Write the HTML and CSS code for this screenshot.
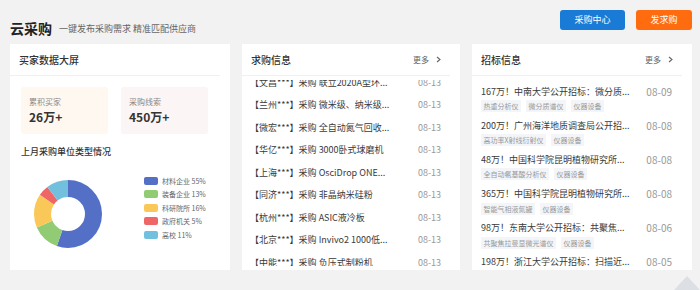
FILE: index.html
```html
<!DOCTYPE html>
<html lang="zh-CN">
<head>
    <meta charset="UTF-8">
    <title>云采购</title>
    <link rel="stylesheet" href="styles.css">
</head>
<body>
    <div class="header">
        <div class="brand">
            <span class="logo">云采购</span>
            <span class="slogan">一键发布采购需求 精准匹配供应商</span>
        </div>
        <div class="actions">
            <a href="#" class="btn btn-blue">采购中心</a>
            <a href="#" class="btn btn-orange">发求购</a>
        </div>
    </div>

    <div class="panels">
        <div class="card">
            <div class="card-head">
                <span class="card-title">买家数据大屏</span>
            </div>
            <div class="card-body screen">
                <div class="stats">
                    <div class="stat stat-buyer">
                        <div class="stat-label">累积买家</div>
                        <div class="stat-value">26万+</div>
                    </div>
                    <div class="stat stat-demand">
                        <div class="stat-label">采购线索</div>
                        <div class="stat-value">450万+</div>
                    </div>
                </div>
                <div class="chart-title">上月采购单位类型情况</div>
                <div class="chart">
                    <svg class="donut" width="94" height="80" viewBox="0 0 94 80">
                        <g transform="rotate(-90 47 40)" fill="none" stroke-width="17">
                            <circle cx="47" cy="40" r="25.5" stroke="#5470c6" stroke-dasharray="88.12 160.22" stroke-dashoffset="0"></circle>
                            <circle cx="47" cy="40" r="25.5" stroke="#91cc75" stroke-dasharray="20.83 160.22" stroke-dashoffset="-88.12"></circle>
                            <circle cx="47" cy="40" r="25.5" stroke="#fac858" stroke-dasharray="25.64 160.22" stroke-dashoffset="-108.95"></circle>
                            <circle cx="47" cy="40" r="25.5" stroke="#ee6666" stroke-dasharray="8.01 160.22" stroke-dashoffset="-134.59"></circle>
                            <circle cx="47" cy="40" r="25.5" stroke="#73c0de" stroke-dasharray="17.62 160.22" stroke-dashoffset="-142.6"></circle>
                        </g>
                    </svg>
                    <ul class="legend">
                        <li><i class="swatch c-blue"></i>材料企业 55%</li>
                        <li><i class="swatch c-green"></i>装备企业 13%</li>
                        <li><i class="swatch c-yellow"></i>科研院所 16%</li>
                        <li><i class="swatch c-red"></i>政府机关 5%</li>
                        <li><i class="swatch c-cyan"></i>高校 11%</li>
                    </ul>
                </div>
            </div>
        </div>

        <div class="card">
            <div class="card-head">
                <span class="card-title">求购信息</span>
                <a href="#" class="more">更多
                    <svg width="5" height="7" viewBox="0 0 5 7"><path d="M1 1 L4 3.5 L1 6" fill="none" stroke="#666" stroke-width="1.1"/></svg>
                </a>
            </div>
            <div class="card-body">
                <div class="scroller">
                    <ul class="demand-list">
                        <li><span class="demand-name">【文昌***】采购 联立2020A型环...</span><span class="demand-date">08-13</span></li>
                        <li><span class="demand-name">【兰州***】采购 微米级、纳米级...</span><span class="demand-date">08-13</span></li>
                        <li><span class="demand-name">【微宏***】采购 全自动氮气回收...</span><span class="demand-date">08-13</span></li>
                        <li><span class="demand-name">【华亿***】采购 3000卧式球磨机</span><span class="demand-date">08-13</span></li>
                        <li><span class="demand-name">【上海***】采购 OsciDrop ONE...</span><span class="demand-date">08-13</span></li>
                        <li><span class="demand-name">【同济***】采购 非晶纳米硅粉</span><span class="demand-date">08-13</span></li>
                        <li><span class="demand-name">【杭州***】采购 ASIC液冷板</span><span class="demand-date">08-13</span></li>
                        <li><span class="demand-name">【北京***】采购 Invivo2 1000低...</span><span class="demand-date">08-13</span></li>
                        <li><span class="demand-name">【中能***】采购 负压式制粉机</span><span class="demand-date">08-13</span></li>
                    </ul>
                </div>
            </div>
        </div>

        <div class="card">
            <div class="card-head">
                <span class="card-title">招标信息</span>
                <a href="#" class="more">更多
                    <svg width="5" height="7" viewBox="0 0 5 7"><path d="M1 1 L4 3.5 L1 6" fill="none" stroke="#666" stroke-width="1.1"/></svg>
                </a>
            </div>
            <div class="card-body">
                <ul class="bid-list">
                    <li>
                        <div class="bid-row"><span class="bid-name">167万！中南大学公开招标：微分质...</span><span class="bid-date">08-09</span></div>
                        <div class="tags"><span>热重分析仪</span><span>微分质谱仪</span><span>仪器设备</span></div>
                    </li>
                    <li>
                        <div class="bid-row"><span class="bid-name">200万！广州海洋地质调查局公开招...</span><span class="bid-date">08-08</span></div>
                        <div class="tags"><span>高功率X射线衍射仪</span><span>仪器设备</span></div>
                    </li>
                    <li>
                        <div class="bid-row"><span class="bid-name">48万！中国科学院昆明植物研究所...</span><span class="bid-date">08-08</span></div>
                        <div class="tags"><span>全自动氨基酸分析仪</span><span>仪器设备</span></div>
                    </li>
                    <li>
                        <div class="bid-row"><span class="bid-name">365万！中国科学院昆明植物研究所...</span><span class="bid-date">08-08</span></div>
                        <div class="tags"><span>智能气相液氮罐</span><span>仪器设备</span></div>
                    </li>
                    <li>
                        <div class="bid-row"><span class="bid-name">98万！东南大学公开招标：共聚焦...</span><span class="bid-date">08-06</span></div>
                        <div class="tags"><span>共聚焦拉曼显微光谱仪</span><span>仪器设备</span></div>
                    </li>
                    <li>
                        <div class="bid-row"><span class="bid-name">198万！浙江大学公开招标：扫描近...</span><span class="bid-date">08-05</span></div>
                        <div class="tags"><span>扫描近场光学显微镜</span><span>仪器设备</span></div>
                    </li>
                </ul>
            </div>
        </div>
    </div>

    <a href="#" class="back-top"></a>
</body>
</html>
```

FILE: styles.css
```css
body {
    margin: 0;
    background: #f2f2f2;
    font-family: "Noto Sans CJK SC", "Noto Sans", sans-serif;
    color: #333;
}

ul {
    margin: 0;
    padding: 0;
    list-style: none;
}

a {
    text-decoration: none;
}

.header {
    display: flex;
    justify-content: space-between;
    align-items: center;
    height: 34px;
    padding: 10px 8px 0 10px;
}

.brand {
    display: flex;
    align-items: center;
    padding-top: 2px;
}

.logo {
    font-size: 14px;
    font-weight: bold;
    color: #222;
}

.slogan {
    margin-left: 7px;
    font-size: 9px;
    color: #666;
}

.actions {
    display: flex;
    gap: 11px;
    align-self: flex-start;
}

.btn {
    height: 20px;
    line-height: 20px;
    border-radius: 3px;
    font-size: 9px;
    color: #fff;
    text-align: center;
}

.btn-blue {
    width: 65px;
    background: #1a7bd7;
}

.btn-orange {
    width: 56px;
    background: #ff6c10;
}

.panels {
    display: grid;
    grid-template-columns: 220px 218px 220px;
    gap: 12px;
    padding-left: 10px;
}

.card {
    background: #fff;
    height: 226px;
    display: flex;
    flex-direction: column;
    overflow: hidden;
}

.card-head {
    display: flex;
    justify-content: space-between;
    align-items: center;
    height: 31px;
    margin-right: 10px;
    padding: 0 9px;
    border-bottom: 1px solid #f0f0f0;
    flex-shrink: 0;
}

.card-title {
    font-size: 10px;
    font-weight: 500;
    color: #333;
}

.more {
    display: flex;
    align-items: center;
    gap: 7px;
    font-size: 8px;
    color: #666;
}

.card-body {
    flex: 1;
    min-height: 0;
    overflow: hidden;
}

/* buyer data screen */
.screen {
    padding: 11px 11px 0 11px;
}

.stats {
    display: flex;
    gap: 13px;
}

.stat {
    width: 87px;
    height: 47px;
    box-sizing: border-box;
    padding: 9px 8px 0;
    border-radius: 3px;
}

.stat-buyer {
    background: #fff8f0;
}

.stat-demand {
    background: #fcf5f5;
}

.stat-label {
    font-size: 8px;
    line-height: 11px;
    color: #888;
}

.stat-value {
    margin-top: 3px;
    font-size: 12px;
    line-height: 14px;
    font-weight: bold;
    color: #333;
}

.chart-title {
    margin-top: 12px;
    font-size: 9px;
    line-height: 12px;
    font-weight: 500;
    color: #333;
}

.chart {
    display: flex;
    margin-top: 16px;
}

.legend {
    margin-left: 29px;
}

.legend li {
    display: flex;
    align-items: center;
    height: 13.5px;
    font-size: 7px;
    color: #666;
}

.swatch {
    width: 14px;
    height: 8px;
    border-radius: 2px;
    margin-right: 4px;
}

.c-blue { background: #5470c6; }
.c-green { background: #91cc75; }
.c-yellow { background: #fac858; }
.c-red { background: #ee6666; }
.c-cyan { background: #73c0de; }

/* demand list */
.scroller {
    height: 186px;
    margin-top: 4px;
    overflow: hidden;
}

.demand-list {
    margin-top: -9px;
    padding: 0 19px 0 8px;
}

.demand-list li {
    display: flex;
    justify-content: space-between;
    align-items: center;
    height: 22.5px;
    font-size: 9px;
}

.demand-name {
    flex: none;
    width: 143px;
    white-space: nowrap;
    overflow: hidden;
    text-overflow: ellipsis;
    color: #3a3a3a;
}

.demand-date {
    flex: none;
    color: #999;
}

/* bid list */
.bid-list {
    padding: 8px 20px 0 9px;
}

.bid-list li {
    height: 34.2px;
}

.bid-row {
    display: flex;
    justify-content: space-between;
    align-items: center;
    height: 14px;
}

.bid-name {
    flex: none;
    width: 160px;
    font-size: 9px;
    white-space: nowrap;
    overflow: hidden;
    text-overflow: ellipsis;
    color: #3a3a3a;
}

.bid-date {
    flex: none;
    font-size: 10px;
    color: #999;
}

.tags {
    display: flex;
    gap: 5px;
    margin-top: 2px;
}

.tags span {
    height: 12px;
    line-height: 12px;
    padding: 0 2.5px;
    font-size: 7px;
    color: #999;
    background: #f3f5f8;
}

.back-top {
    position: absolute;
    left: 674px;
    top: 276px;
    width: 0;
    height: 0;
    border-left: 13px solid transparent;
    border-right: 13px solid transparent;
    border-bottom: 14px solid #dcdfe3;
}
```
